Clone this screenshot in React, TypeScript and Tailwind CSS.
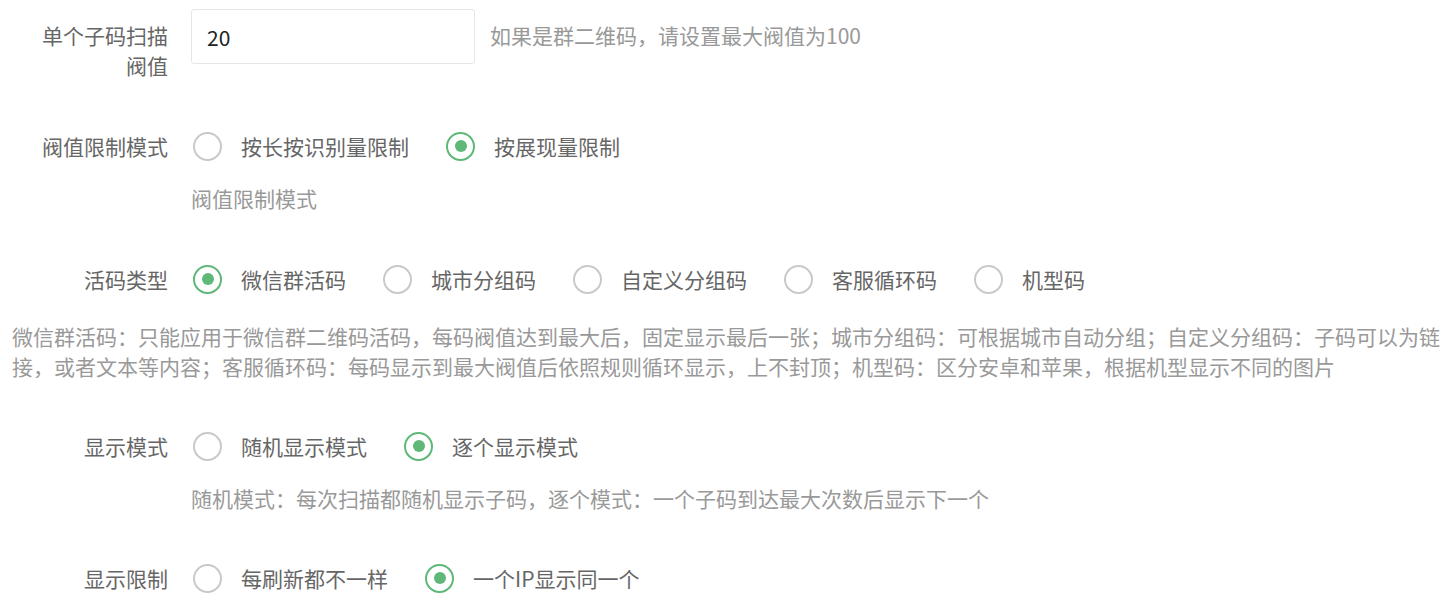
import React, { useState } from 'react';

type Option = { value: string; label: string };

const Radio: React.FC<{ checked: boolean; label: string; onClick: () => void }> = ({ checked, label, onClick }) => (
  <button type="button" onClick={onClick} className="flex items-center mr-[37px] cursor-pointer">
    <span
      className={
        'w-[29px] h-[29px] rounded-full border-2 flex items-center justify-center ' +
        (checked ? 'border-[#5FB878]' : 'border-[#c9c9c9]')
      }
    >
      {checked && <span className="w-[12px] h-[12px] rounded-full bg-[#5FB878]"></span>}
    </span>
    <span className="ml-[19px] text-[#666]">{label}</span>
  </button>
);

const RadioGroup: React.FC<{ options: Option[]; value: string; onChange: (v: string) => void }> = ({
  options,
  value,
  onChange,
}) => (
  <div className="flex items-center h-[30px] ml-[2px]">
    {options.map(o => (
      <Radio key={o.value} checked={value === o.value} label={o.label} onClick={() => onChange(o.value)} />
    ))}
  </div>
);

const Label: React.FC<{ children: React.ReactNode }> = ({ children }) => (
  <div className="w-[168px] shrink-0 text-right text-[#666] leading-[30px]">{children}</div>
);

export default function App() {
  const [threshold, setThreshold] = useState('20');
  const [limitMode, setLimitMode] = useState('show');
  const [codeType, setCodeType] = useState('wechat');
  const [showMode, setShowMode] = useState('seq');
  const [showLimit, setShowLimit] = useState('ip');

  return (
    <div
      className="bg-white min-h-[608px] pt-[9px] text-[21px] leading-[30px]"
      style={{ fontFamily: '"Noto Sans CJK SC", "Noto Sans", sans-serif' }}
    >
      {/* 单个子码扫描阀值 */}
      <div className="flex items-start">
        <div className="pt-[11px]">
          <Label>
            单个子码扫描
            <br />
            阀值
          </Label>
        </div>
        <input
          value={threshold}
          onChange={e => setThreshold(e.target.value)}
          className="ml-[23px] w-[284px] h-[55px] border border-[#e6e6e6] rounded-[3px] px-[15px] text-[21px] text-[#222] outline-none"
        />
        <div className="ml-[15px] mt-[11px] text-[#999]">如果是群二维码，请设置最大阀值为100</div>
      </div>

      {/* 阀值限制模式 */}
      <div className="mt-[51px]">
        <div className="flex">
          <Label>阀值限制模式</Label>
          <div className="ml-[23px]">
            <RadioGroup
              value={limitMode}
              onChange={setLimitMode}
              options={[
                { value: 'press', label: '按长按识别量限制' },
                { value: 'show', label: '按展现量限制' },
              ]}
            />
          </div>
        </div>
        <div className="ml-[191px] mt-[22px] text-[#999]">阀值限制模式</div>
      </div>

      {/* 活码类型 */}
      <div className="mt-[51px]">
        <div className="flex">
          <Label>活码类型</Label>
          <div className="ml-[23px]">
            <RadioGroup
              value={codeType}
              onChange={setCodeType}
              options={[
                { value: 'wechat', label: '微信群活码' },
                { value: 'city', label: '城市分组码' },
                { value: 'custom', label: '自定义分组码' },
                { value: 'service', label: '客服循环码' },
                { value: 'device', label: '机型码' },
              ]}
            />
          </div>
        </div>
        <div className="pl-[12px] mt-[27px] text-[#999]">
          微信群活码：只能应用于微信群二维码活码，每码阀值达到最大后，固定显示最后一张；城市分组码：可根据城市自动分组；自定义分组码：子码可以为链接，或者文本等内容；客服循环码：每码显示到最大阀值后依照规则循环显示，上不封顶；机型码：区分安卓和苹果，根据机型显示不同的图片
        </div>
      </div>

      {/* 显示模式 */}
      <div className="mt-[50px]">
        <div className="flex">
          <Label>显示模式</Label>
          <div className="ml-[23px]">
            <RadioGroup
              value={showMode}
              onChange={setShowMode}
              options={[
                { value: 'random', label: '随机显示模式' },
                { value: 'seq', label: '逐个显示模式' },
              ]}
            />
          </div>
        </div>
        <div className="ml-[191px] mt-[22px] text-[#999]">
          随机模式：每次扫描都随机显示子码，逐个模式：一个子码到达最大次数后显示下一个
        </div>
      </div>

      {/* 显示限制 */}
      <div className="mt-[50px] flex">
        <Label>显示限制</Label>
        <div className="ml-[23px]">
          <RadioGroup
            value={showLimit}
            onChange={setShowLimit}
            options={[
              { value: 'refresh', label: '每刷新都不一样' },
              { value: 'ip', label: '一个IP显示同一个' },
            ]}
          />
        </div>
      </div>
    </div>
  );
}
